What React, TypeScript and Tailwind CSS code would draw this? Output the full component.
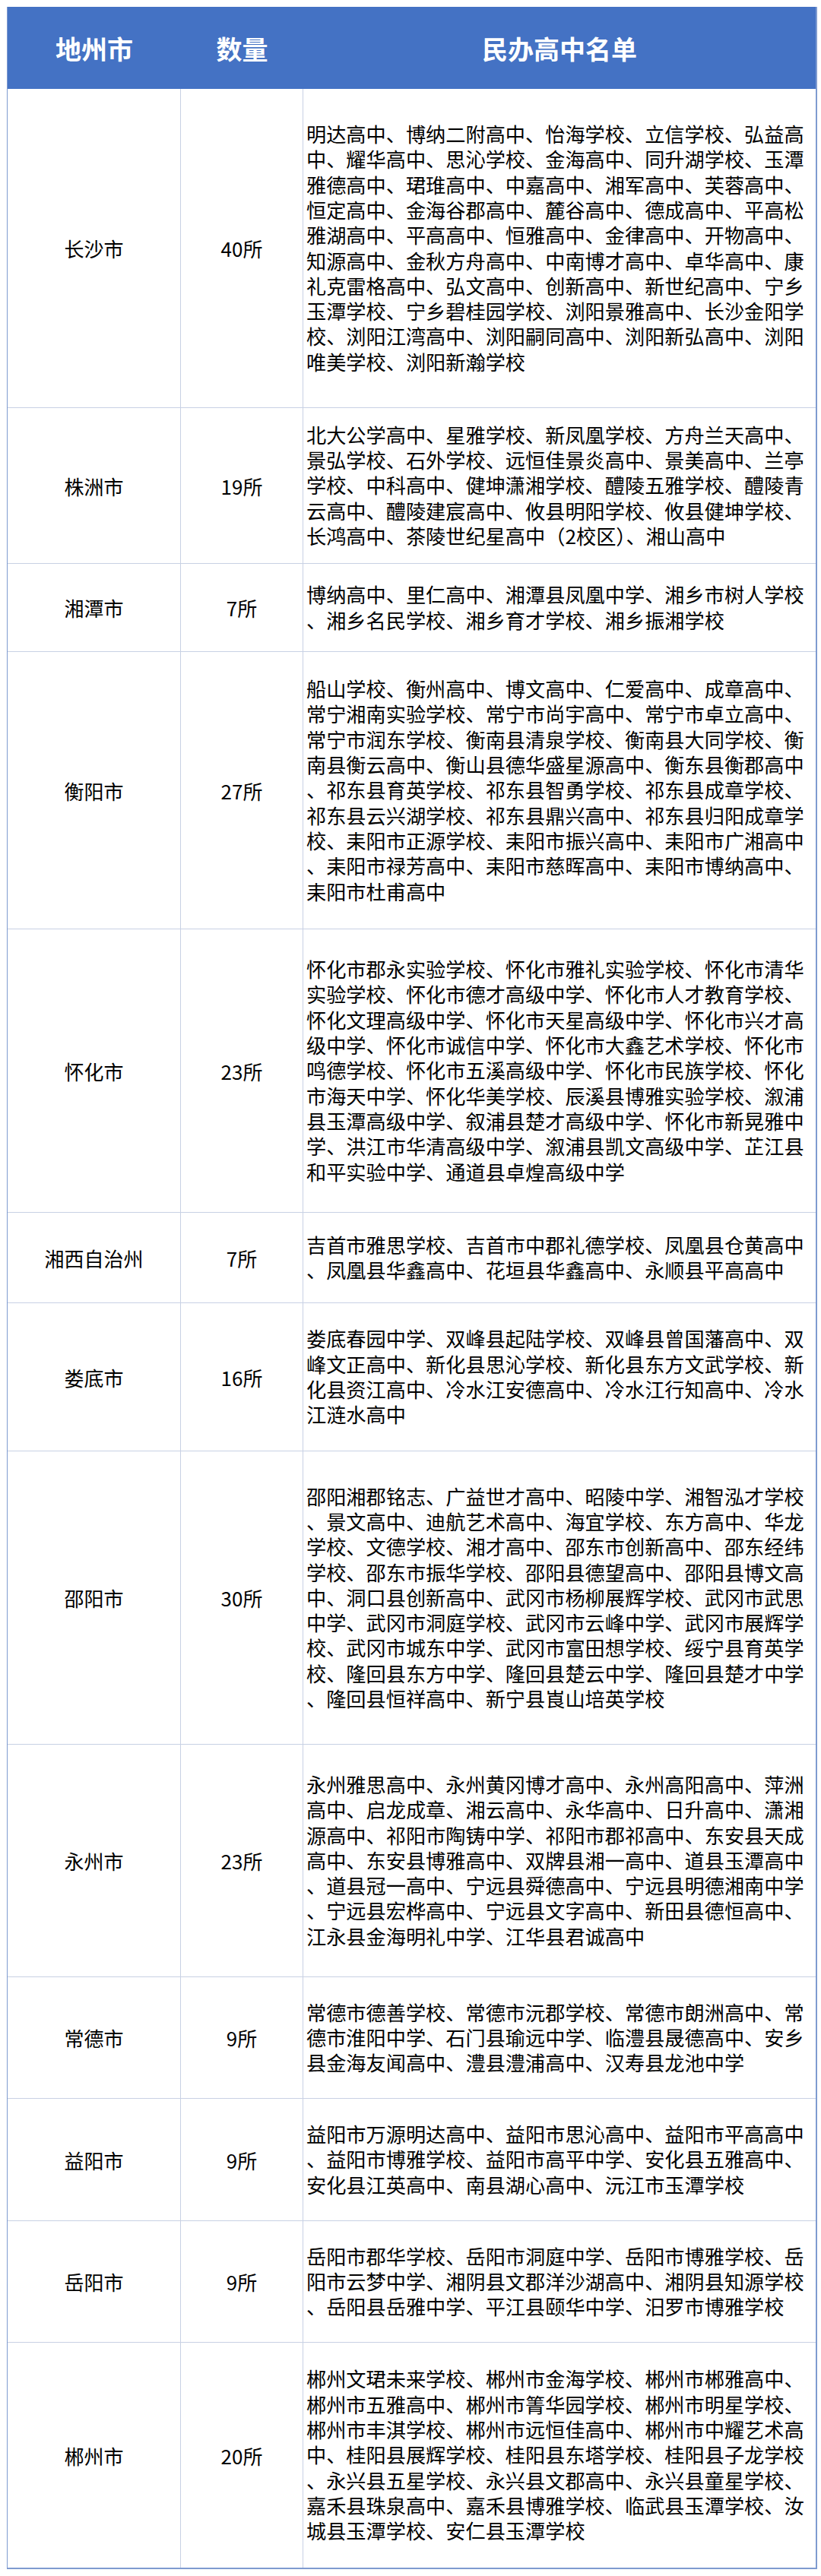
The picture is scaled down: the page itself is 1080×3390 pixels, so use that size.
const rows: { city: string; count: string; h: string; lines: string[] }[] = [
  {
    city: "长沙市",
    count: "40所",
    h: "h-[420px]",
    lines: [
      "明达高中、博纳二附高中、怡海学校、立信学校、弘益高",
      "中、耀华高中、思沁学校、金海高中、同升湖学校、玉潭",
      "雅德高中、珺琟高中、中嘉高中、湘军高中、芙蓉高中、",
      "恒定高中、金海谷郡高中、麓谷高中、德成高中、平高松",
      "雅湖高中、平高高中、恒雅高中、金律高中、开物高中、",
      "知源高中、金秋方舟高中、中南博才高中、卓华高中、康",
      "礼克雷格高中、弘文高中、创新高中、新世纪高中、宁乡",
      "玉潭学校、宁乡碧桂园学校、浏阳景雅高中、长沙金阳学",
      "校、浏阳江湾高中、浏阳嗣同高中、浏阳新弘高中、浏阳",
      "唯美学校、浏阳新瀚学校",
    ],
  },
  {
    city: "株洲市",
    count: "19所",
    h: "h-[205px]",
    lines: [
      "北大公学高中、星雅学校、新凤凰学校、方舟兰天高中、",
      "景弘学校、石外学校、远恒佳景炎高中、景美高中、兰亭",
      "学校、中科高中、健坤潇湘学校、醴陵五雅学校、醴陵青",
      "云高中、醴陵建宸高中、攸县明阳学校、攸县健坤学校、",
      "长鸿高中、茶陵世纪星高中（2校区）、湘山高中",
    ],
  },
  {
    city: "湘潭市",
    count: "7所",
    h: "h-[116px]",
    lines: [
      "博纳高中、里仁高中、湘潭县凤凰中学、湘乡市树人学校",
      "、湘乡名民学校、湘乡育才学校、湘乡振湘学校",
    ],
  },
  {
    city: "衡阳市",
    count: "27所",
    h: "h-[365px]",
    lines: [
      "船山学校、衡州高中、博文高中、仁爱高中、成章高中、",
      "常宁湘南实验学校、常宁市尚宇高中、常宁市卓立高中、",
      "常宁市润东学校、衡南县清泉学校、衡南县大同学校、衡",
      "南县衡云高中、衡山县德华盛星源高中、衡东县衡郡高中",
      "、祁东县育英学校、祁东县智勇学校、祁东县成章学校、",
      "祁东县云兴湖学校、祁东县鼎兴高中、祁东县归阳成章学",
      "校、耒阳市正源学校、耒阳市振兴高中、耒阳市广湘高中",
      "、耒阳市禄芳高中、耒阳市慈晖高中、耒阳市博纳高中、",
      "耒阳市杜甫高中",
    ],
  },
  {
    city: "怀化市",
    count: "23所",
    h: "h-[373px]",
    lines: [
      "怀化市郡永实验学校、怀化市雅礼实验学校、怀化市清华",
      "实验学校、怀化市德才高级中学、怀化市人才教育学校、",
      "怀化文理高级中学、怀化市天星高级中学、怀化市兴才高",
      "级中学、怀化市诚信中学、怀化市大鑫艺术学校、怀化市",
      "鸣德学校、怀化市五溪高级中学、怀化市民族学校、怀化",
      "市海天中学、怀化华美学校、辰溪县博雅实验学校、溆浦",
      "县玉潭高级中学、叙浦县楚才高级中学、怀化市新晃雅中",
      "学、洪江市华清高级中学、溆浦县凯文高级中学、芷江县",
      "和平实验中学、通道县卓煌高级中学",
    ],
  },
  {
    city: "湘西自治州",
    count: "7所",
    h: "h-[119px]",
    lines: [
      "吉首市雅思学校、吉首市中郡礼德学校、凤凰县仓黄高中",
      "、凤凰县华鑫高中、花垣县华鑫高中、永顺县平高高中",
    ],
  },
  {
    city: "娄底市",
    count: "16所",
    h: "h-[195px]",
    lines: [
      "娄底春园中学、双峰县起陆学校、双峰县曾国藩高中、双",
      "峰文正高中、新化县思沁学校、新化县东方文武学校、新",
      "化县资江高中、冷水江安德高中、冷水江行知高中、冷水",
      "江涟水高中",
    ],
  },
  {
    city: "邵阳市",
    count: "30所",
    h: "h-[386px]",
    lines: [
      "邵阳湘郡铭志、广益世才高中、昭陵中学、湘智泓才学校",
      "、景文高中、迪航艺术高中、海宜学校、东方高中、华龙",
      "学校、文德学校、湘才高中、邵东市创新高中、邵东经纬",
      "学校、邵东市振华学校、邵阳县德望高中、邵阳县博文高",
      "中、洞口县创新高中、武冈市杨柳展辉学校、武冈市武思",
      "中学、武冈市洞庭学校、武冈市云峰中学、武冈市展辉学",
      "校、武冈市城东中学、武冈市富田想学校、绥宁县育英学",
      "校、隆回县东方中学、隆回县楚云中学、隆回县楚才中学",
      "、隆回县恒祥高中、新宁县崀山培英学校",
    ],
  },
  {
    city: "永州市",
    count: "23所",
    h: "h-[306px]",
    lines: [
      "永州雅思高中、永州黄冈博才高中、永州高阳高中、萍洲",
      "高中、启龙成章、湘云高中、永华高中、日升高中、潇湘",
      "源高中、祁阳市陶铸中学、祁阳市郡祁高中、东安县天成",
      "高中、东安县博雅高中、双牌县湘一高中、道县玉潭高中",
      "、道县冠一高中、宁远县舜德高中、宁远县明德湘南中学",
      "、宁远县宏桦高中、宁远县文字高中、新田县德恒高中、",
      "江永县金海明礼中学、江华县君诚高中",
    ],
  },
  {
    city: "常德市",
    count: "9所",
    h: "h-[160px]",
    lines: [
      "常德市德善学校、常德市沅郡学校、常德市朗洲高中、常",
      "德市淮阳中学、石门县瑜远中学、临澧县晟德高中、安乡",
      "县金海友闻高中、澧县澧浦高中、汉寿县龙池中学",
    ],
  },
  {
    city: "益阳市",
    count: "9所",
    h: "h-[161px]",
    lines: [
      "益阳市万源明达高中、益阳市思沁高中、益阳市平高高中",
      "、益阳市博雅学校、益阳市高平中学、安化县五雅高中、",
      "安化县江英高中、南县湖心高中、沅江市玉潭学校",
    ],
  },
  {
    city: "岳阳市",
    count: "9所",
    h: "h-[160px]",
    lines: [
      "岳阳市郡华学校、岳阳市洞庭中学、岳阳市博雅学校、岳",
      "阳市云梦中学、湘阴县文郡洋沙湖高中、湘阴县知源学校",
      "、岳阳县岳雅中学、平江县颐华中学、汨罗市博雅学校",
    ],
  },
  {
    city: "郴州市",
    count: "20所",
    h: "h-[296px]",
    lines: [
      "郴州文珺未来学校、郴州市金海学校、郴州市郴雅高中、",
      "郴州市五雅高中、郴州市箐华园学校、郴州市明星学校、",
      "郴州市丰淇学校、郴州市远恒佳高中、郴州市中耀艺术高",
      "中、桂阳县展辉学校、桂阳县东塔学校、桂阳县子龙学校",
      "、永兴县五星学校、永兴县文郡高中、永兴县童星学校、",
      "嘉禾县珠泉高中、嘉禾县博雅学校、临武县玉潭学校、汝",
      "城县玉潭学校、安仁县玉潭学校",
    ],
  },
];

export default function App() {
  return (
    <div
      className="w-[1080px] h-[3390px] bg-white pt-[9px] pl-[9px] text-black"
      style={{ fontFamily: '"Noto Sans CJK SC", "Noto Sans", sans-serif' }}
    >
      <div className="w-[1066px] border-r-2 border-b-2 border-l border-[#7f9bd0]">
        {/* 表头 */}
        <div className="flex h-[108px] bg-[#4472c4] text-white font-bold text-[34px]">
          <div className="w-[228px] flex items-center justify-center">地州市</div>
          <div className="w-[161px] flex items-center justify-center">数量</div>
          <div className="flex-1 flex items-center justify-center">民办高中名单</div>
        </div>

        {rows.map((row, i) => (
          <div
            key={row.city}
            className={`flex box-border ${row.h} ${i < rows.length - 1 ? "border-b border-[#c8d1e4]" : ""}`}
          >
            <div className="w-[228px] flex items-center justify-center text-[26px] border-r border-[#c8d1e4]">
              {row.city}
            </div>
            <div className="w-[161px] flex items-center justify-center text-[26px] border-r border-[#c8d1e4]">
              {row.count}
            </div>
            <div className="flex-1 flex flex-col justify-center pl-[4px] text-[26.2px] leading-[33.3px]">
              {row.lines.map((line, j) => (
                <div key={j} className="whitespace-nowrap">
                  {line}
                </div>
              ))}
            </div>
          </div>
        ))}
      </div>
    </div>
  );
}
